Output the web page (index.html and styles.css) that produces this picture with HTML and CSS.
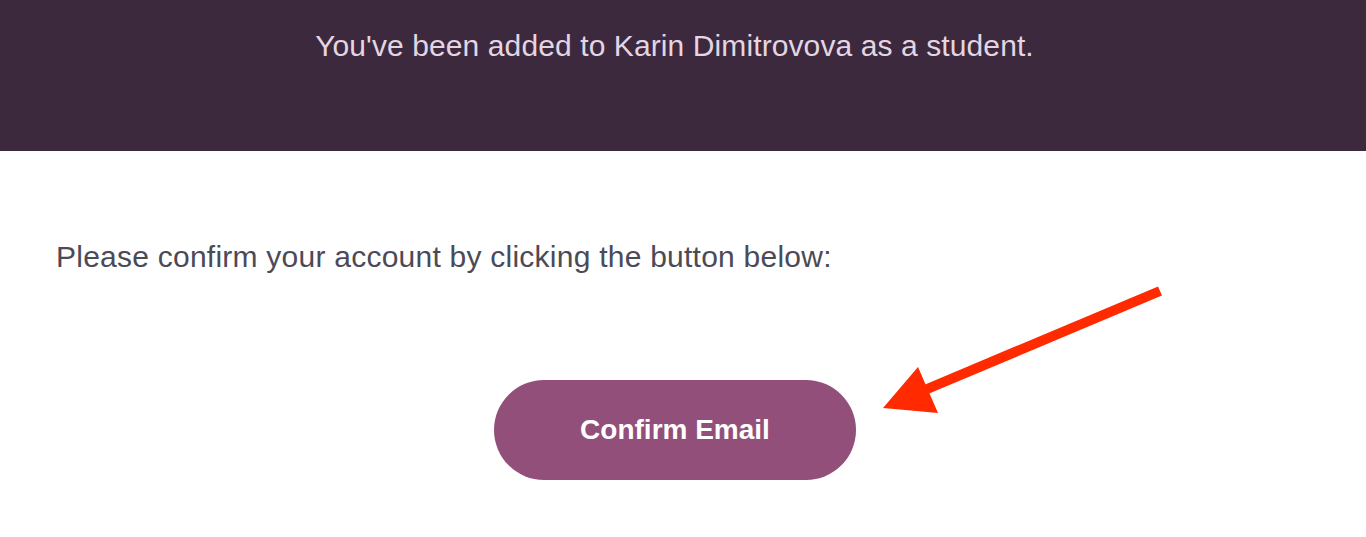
FILE: index.html
```html
<!DOCTYPE html>
<html>
<head>
<meta charset="utf-8">
<link rel="stylesheet" href="styles.css">
</head>
<body>
<header class="banner">
  <p class="banner-text">You've been added to Karin Dimitrovova as a student.</p>
</header>
<main class="content">
  <p class="lead">Please confirm your account by clicking the button below:</p>
  <div class="actions">
    <a class="btn">Confirm Email</a>
  </div>
  <svg class="arrow" width="1366" height="537" viewBox="0 0 1366 537">
    <line x1="1160" y1="291" x2="920" y2="392" stroke="#ff2a00" stroke-width="10"/>
    <polygon points="883,408 918,367 938,413" fill="#ff2a00"/>
  </svg>
</main>
</body>
</html>
```
FILE: styles.css
```css
html, body {
  margin: 0;
  padding: 0;
  background: #ffffff;
  font-family: "Liberation Sans", Arial, sans-serif;
}
body {
  position: relative;
  width: 1366px;
  height: 537px;
  overflow: hidden;
}
.banner {
  height: 151px;
  background: #3d293d;
  display: flex;
  justify-content: center;
  padding-right: 17px;
}
.banner-text {
  margin: 28px 0 0;
  font-size: 30px;
  line-height: 36px;
  color: #e3d6e3;
  letter-spacing: 0.1px;
}
.content {
  padding: 88px 0 0 56px;
}
.lead {
  margin: 0;
  font-size: 30px;
  line-height: 36px;
  color: #4b4a57;
  letter-spacing: 0.24px;
}
.actions {
  display: flex;
  padding: 105px 0 0 438px;
}
.btn {
  width: 362px;
  height: 100px;
  border-radius: 50px;
  background: #924f7a;
  color: #ffffff;
  font-weight: bold;
  font-size: 28px;
  display: flex;
  align-items: center;
  justify-content: center;
}
.arrow {
  position: absolute;
  left: 0;
  top: 0;
  pointer-events: none;
}
```
